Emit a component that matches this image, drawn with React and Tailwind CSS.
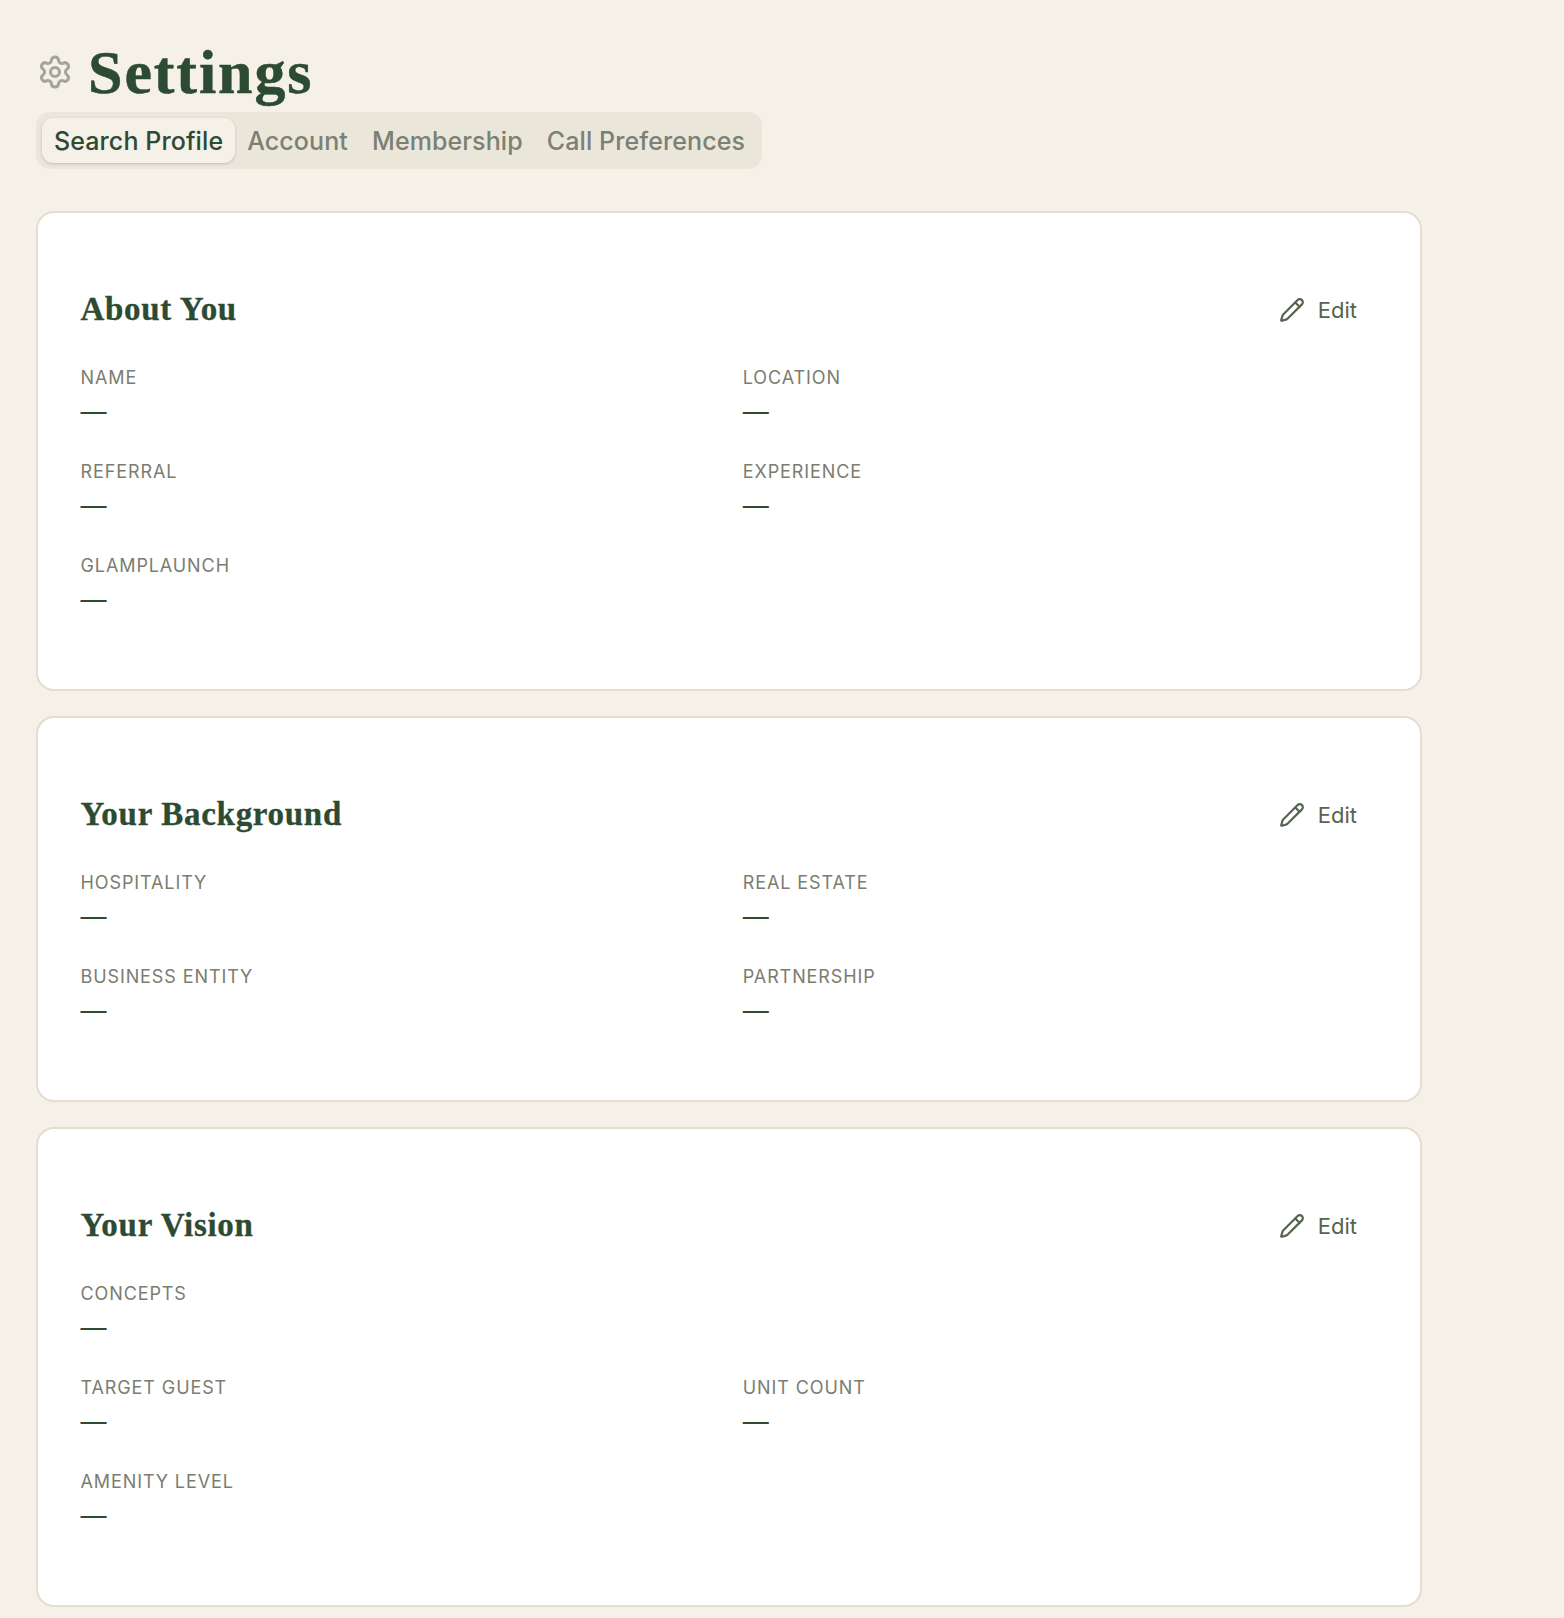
import React from "react";
import { Settings, Pencil } from "lucide-react";

const sections = [
  { title: "About You", rows: [["NAME", "LOCATION"], ["REFERRAL", "EXPERIENCE"], ["GLAMPLAUNCH"]] },
  { title: "Your Background", rows: [["HOSPITALITY", "REAL ESTATE"], ["BUSINESS ENTITY", "PARTNERSHIP"]] },
  { title: "Your Vision", rows: [["CONCEPTS"], ["TARGET GUEST", "UNIT COUNT"], ["AMENITY LEVEL"]] },
];

function Field({ label }) {
  return (
    <div className="h-[66px]">
      <div className="h-[26px] text-[18px] leading-[26px] tracking-[0.9px] text-[#7b7d6f]">{label}</div>
      <div className="mt-[5px] h-[32px] text-[26px] leading-[32px] text-[#2d4a32]">—</div>
    </div>
  );
}

function Card({ title, rows }) {
  return (
    <section className="w-[1386px] rounded-[18px] border-2 border-[#e3decf] bg-white pl-[42.5px] pr-[42px] pt-[75px] pb-[70.5px]">
      <div className="flex h-[44px] items-center justify-between">
        <h2 className="font-['Liberation_Serif'] text-[33px] font-bold tracking-[0.7px] text-[#2d4a32] [-webkit-text-stroke:0.3px_#2d4a32]">{title}</h2>
        <button className="mr-[21px] flex items-center gap-[13px] text-[22px] font-normal text-[#56634f]">
          <Pencil className="h-[26px] w-[26px]" strokeWidth={2} />
          Edit
        </button>
      </div>
      <div className="mt-[32.5px] grid grid-cols-2 gap-x-[27px] gap-y-[28px]">
        {rows.map((row) =>
          [row[0], row[1]].map((l, i) =>
            l ? <Field key={l} label={l} /> : <div key={row[0] + i} />
          )
        )}
      </div>
    </section>
  );
}

export default function App() {
  return (
    <div className="min-h-[1618px] bg-[#f5f0e8] px-[36px] pt-[42px] font-['Inter',sans-serif]">
      <div className="flex h-[60px] items-center gap-[15px]">
        <Settings className="ml-[1px] h-[36px] w-[36px] text-[#a3a596]" strokeWidth={2} />
        <h1 className="font-['Liberation_Serif'] text-[62px] font-bold leading-[60px] tracking-[1.9px] text-[#2d4a32] [-webkit-text-stroke:0.5px_#2d4a32]">Settings</h1>
      </div>
      <div className="mt-[10px] flex h-[57px] w-[726px] items-center whitespace-nowrap rounded-[14px] bg-[#ebe6da] px-[6px] text-[25px] font-medium tracking-[0.1px] text-[#7b8074]">
        <div className="flex h-[45px] items-center rounded-[11px] bg-[#f5f0e8] px-[12px] pt-[2px] text-[#2d4a32] shadow-[0_1px_3px_rgba(0,0,0,0.18)]">Search Profile</div>
        <div className="flex h-[45px] items-center px-[12px] pt-[2px]">Account</div>
        <div className="flex h-[45px] items-center px-[12px] pt-[2px]">Membership</div>
        <div className="flex h-[45px] items-center px-[12px] pt-[2px]">Call Preferences</div>
      </div>
      <div className="mt-[42px] flex flex-col gap-[25px]">
        {sections.map((s) => <Card key={s.title} {...s} />)}
      </div>
    </div>
  );
}
